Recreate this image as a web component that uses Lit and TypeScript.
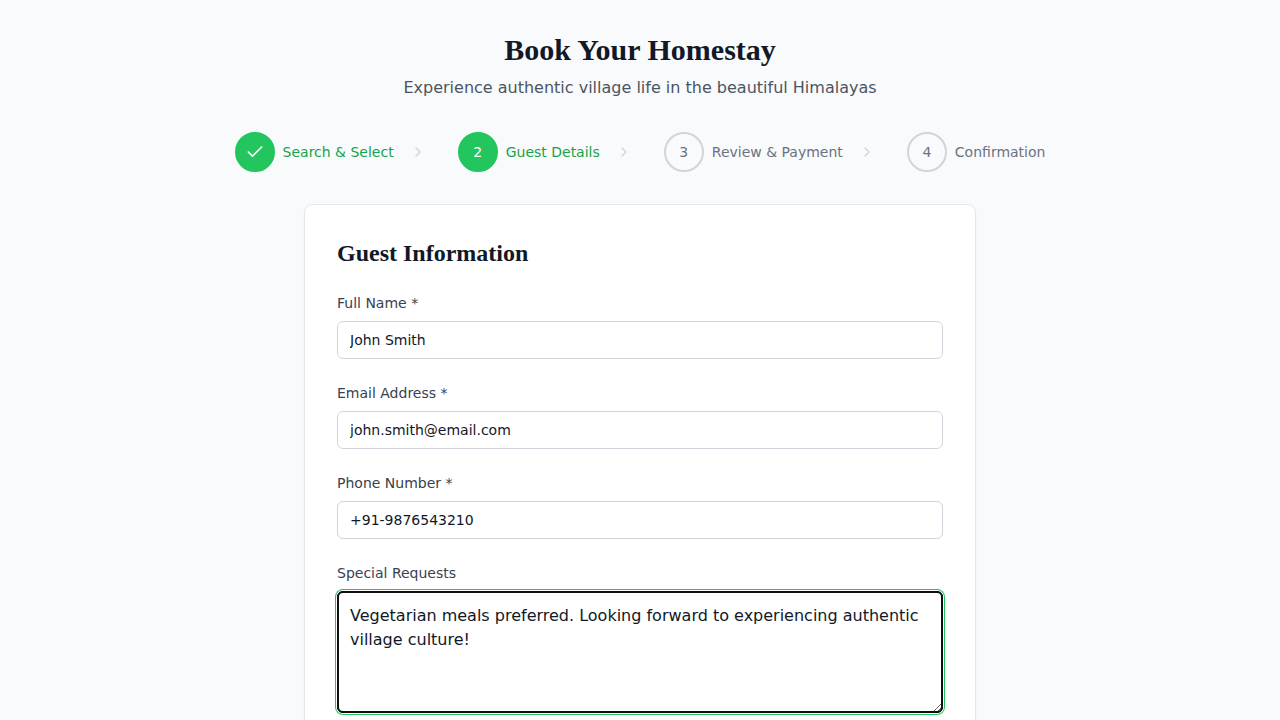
import { LitElement, html, css, svg } from "lit";
import { customElement } from "lit/decorators.js";

const check = svg`<path d="M20 6 9 17l-5-5" />`;
const chevron = svg`<path d="m9 18 6-6-6-6" />`;

const icon = (shape: unknown, cls: string) => html`<svg
  class=${cls}
  viewBox="0 0 24 24"
  fill="none"
  stroke="currentColor"
  stroke-width="2"
  stroke-linecap="round"
  stroke-linejoin="round"
  aria-hidden="true"
>${shape}</svg>`;

const steps = ["Search & Select", "Guest Details", "Review & Payment", "Confirmation"];
const current = 1;

const fields = [
  { label: "Full Name *", type: "text", value: "John Smith" },
  { label: "Email Address *", type: "email", value: "john.smith@email.com" },
  { label: "Phone Number *", type: "tel", value: "+91-9876543210" },
];

@customElement("app-root")
export class AppRoot extends LitElement {
  static styles = css`
    :host {
      display: block;
      height: 100vh;
      overflow: hidden;
      background: #f9fafb;
      font-family: "DejaVu Sans", sans-serif;
      font-size: 16px;
      line-height: 24px;
      color: #111827;
    }
    *, *::before, *::after { box-sizing: border-box; }
    .page { padding: 32px 16px; }
    header { text-align: center; margin-bottom: 32px; }
    h1, h2 { font-family: "Liberation Serif", serif; font-weight: 700; margin: 0; }
    h1 { font-size: 30px; line-height: 36px; margin-bottom: 8px; }
    header p { margin: 0; color: #4b5563; }
    .steps { display: flex; justify-content: center; align-items: center; gap: 16px; margin-bottom: 32px; }
    .step { display: flex; align-items: center; font-size: 14px; line-height: 20px; font-weight: 500; color: #6b7280; }
    .dot {
      width: 40px; height: 40px; border-radius: 50%;
      border: 2px solid #d1d5db;
      display: flex; align-items: center; justify-content: center;
    }
    .reached .dot { background: #22c55e; border-color: #22c55e; color: #fff; }
    .name { margin-left: 8px; white-space: nowrap; }
    .reached .name { color: #16a34a; }
    .check { width: 20px; height: 20px; }
    .chevron { width: 16px; height: 16px; margin: 0 16px; color: #d1d5db; }
    .card {
      max-width: 672px; margin: 0 auto; padding: 32px;
      background: #fff; border: 1px solid #e5e7eb; border-radius: 8px;
      box-shadow: 0 1px 2px rgba(0, 0, 0, 0.05);
    }
    h2 { font-size: 24px; line-height: 32px; margin-bottom: 24px; }
    form { display: flex; flex-direction: column; gap: 24px; }
    label { display: block; font-size: 14px; line-height: 20px; font-weight: 500; color: #374151; margin-bottom: 8px; }
    input, textarea {
      display: block; width: 100%; margin: 0;
      border: 1px solid #d1d5db; border-radius: 6px; padding: 8px 12px;
      font-family: inherit; color: #111827; background: #fff;
    }
    input { height: 38px; font-size: 14px; line-height: 20px; }
    textarea {
      height: 122px; font-size: 16px; line-height: 24px; padding: 12px;
      border-color: #101010; outline: 2px solid #101010; outline-offset: -2px;
      box-shadow: 0 0 0 1px #fff, 0 0 0 2px #22c55e; resize: vertical;
    }
  `;

  render() {
    return html`
      <div class="page">
        <header>
          <h1>Book Your Homestay</h1>
          <p>Experience authentic village life in the beautiful Himalayas</p>
        </header>
        <nav class="steps">
          ${steps.map((name, i) => html`
            <div class="step ${i <= current ? "reached" : ""}">
              <span class="dot">${i < current ? icon(check, "check") : i + 1}</span>
              <span class="name">${name}</span>
              ${i < steps.length - 1 ? icon(chevron, "chevron") : ""}
            </div>`)}
        </nav>
        <main class="card">
          <h2>Guest Information</h2>
          <form>
            ${fields.map((f, i) => html`
              <div>
                <label for="f${i}">${f.label}</label>
                <input id="f${i}" type=${f.type} .value=${f.value} />
              </div>`)}
            <div>
              <label for="requests">Special Requests</label>
              <textarea id="requests" spellcheck="false" .value=${"Vegetarian meals preferred. Looking forward to experiencing authentic village culture!"}></textarea>
            </div>
          </form>
        </main>
      </div>
    `;
  }
}
